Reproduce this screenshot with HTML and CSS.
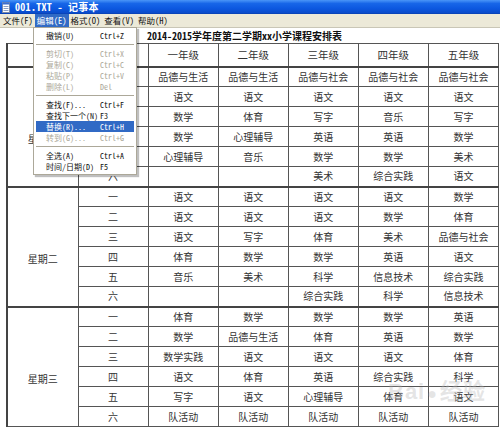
FILE: index.html
```html
<!DOCTYPE html>
<html lang="zh-CN">
<head>
<meta charset="utf-8">
<title>001.TXT - 记事本</title>
<link rel="stylesheet" href="styles.css">
</head>
<body>
<div class="window">
  <div class="titlebar">
    <svg class="app-icon" width="8" height="11" viewBox="0 0 8 11">
      <rect x="0.5" y="0.5" width="7" height="10" fill="#fff" stroke="#7a8aa8"/>
      <rect x="0.5" y="0.5" width="7" height="2" fill="#3a6fd0"/>
      <line x1="1.5" y1="4.5" x2="6.5" y2="4.5" stroke="#8aa0c8"/>
      <line x1="1.5" y1="6.5" x2="6.5" y2="6.5" stroke="#8aa0c8"/>
      <line x1="1.5" y1="8.5" x2="6.5" y2="8.5" stroke="#8aa0c8"/>
    </svg>
    <span class="title-text">001.TXT - 记事本</span>
  </div>
  <div class="menubar">
    <span class="mi">文件(F)</span>
    <span class="mi active">编辑(E)</span>
    <span class="mi">格式(O)</span>
    <span class="mi">查看(V)</span>
    <span class="mi">帮助(H)</span>
  </div>
  <div class="content">
    <div class="doc-title">2014-2015学年度第二学期xx小学课程安排表</div>
    <table class="schedule">
      <colgroup>
        <col class="c-day"><col class="c-per"><col class="c-g"><col class="c-g"><col class="c-g"><col class="c-g"><col class="c-g">
      </colgroup>
      <thead>
        <tr class="head-row"><th></th><th></th><th>一年级</th><th>二年级</th><th>三年级</th><th>四年级</th><th>五年级</th></tr>
      </thead>
      <tbody>
        <tr><td class="day" rowspan="6">星期一</td><td>一</td><td>品德与生活</td><td>品德与生活</td><td>品德与社会</td><td>品德与社会</td><td>品德与社会</td></tr>
        <tr><td>二</td><td>语文</td><td>语文</td><td>语文</td><td>语文</td><td>语文</td></tr>
        <tr><td>三</td><td>数学</td><td>体育</td><td>写字</td><td>音乐</td><td>写字</td></tr>
        <tr><td>四</td><td>数学</td><td>心理辅导</td><td>英语</td><td>英语</td><td>数学</td></tr>
        <tr><td>五</td><td>心理辅导</td><td>音乐</td><td>数学</td><td>数学</td><td>美术</td></tr>
        <tr><td>六</td><td></td><td></td><td>美术</td><td>综合实践</td><td>语文</td></tr>
      </tbody>
      <tbody>
        <tr><td class="day" rowspan="6">星期二</td><td>一</td><td>语文</td><td>语文</td><td>语文</td><td>语文</td><td>数学</td></tr>
        <tr><td>二</td><td>语文</td><td>语文</td><td>语文</td><td>数学</td><td>体育</td></tr>
        <tr><td>三</td><td>语文</td><td>写字</td><td>体育</td><td>美术</td><td>品德与社会</td></tr>
        <tr><td>四</td><td>体育</td><td>数学</td><td>数学</td><td>英语</td><td>语文</td></tr>
        <tr><td>五</td><td>音乐</td><td>美术</td><td>科学</td><td>信息技术</td><td>综合实践</td></tr>
        <tr><td>六</td><td></td><td></td><td>综合实践</td><td>科学</td><td>信息技术</td></tr>
      </tbody>
      <tbody>
        <tr><td class="day" rowspan="6">星期三</td><td>一</td><td>体育</td><td>数学</td><td>数学</td><td>数学</td><td>英语</td></tr>
        <tr><td>二</td><td>数学</td><td>品德与生活</td><td>体育</td><td>英语</td><td>数学</td></tr>
        <tr><td>三</td><td>数学实践</td><td>语文</td><td>语文</td><td>语文</td><td>体育</td></tr>
        <tr><td>四</td><td>语文</td><td>体育</td><td>英语</td><td>综合实践</td><td>科学</td></tr>
        <tr><td>五</td><td>写字</td><td>语文</td><td>心理辅导</td><td>体育</td><td>语文</td></tr>
        <tr><td>六</td><td>队活动</td><td>队活动</td><td>队活动</td><td>队活动</td><td>队活动</td></tr>
      </tbody>
    </table>
    <div class="watermark">Bai<span class="paw">●</span>经验</div>
  </div>

  <div class="dropdown">
    <div class="item"><span class="lbl">撤销(U)</span><span class="key">Ctrl+Z</span></div>
    <div class="sep"></div>
    <div class="item disabled"><span class="lbl">剪切(T)</span><span class="key">Ctrl+X</span></div>
    <div class="item disabled"><span class="lbl">复制(C)</span><span class="key">Ctrl+C</span></div>
    <div class="item disabled"><span class="lbl">粘贴(P)</span><span class="key">Ctrl+V</span></div>
    <div class="item disabled"><span class="lbl">删除(L)</span><span class="key">Del</span></div>
    <div class="sep"></div>
    <div class="item"><span class="lbl">查找(F)...</span><span class="key">Ctrl+F</span></div>
    <div class="item"><span class="lbl">查找下一个(N)</span><span class="key">F3</span></div>
    <div class="item selected"><span class="lbl">替换(R)...</span><span class="key">Ctrl+H</span></div>
    <div class="item disabled"><span class="lbl">转到(G)...</span><span class="key">Ctrl+G</span></div>
    <div class="sep"></div>
    <div class="item"><span class="lbl">全选(A)</span><span class="key">Ctrl+A</span></div>
    <div class="item"><span class="lbl">时间/日期(D)</span><span class="key">F5</span></div>
  </div>
</div>
</body>
</html>
```
FILE: styles.css
```css
* { box-sizing: border-box; }
html, body { margin: 0; padding: 0; }
body {
  width: 500px;
  height: 428px;
  overflow: hidden;
  background: #fff;
  font-family: "Noto Sans CJK SC", sans-serif;
}
.window {
  position: relative;
  width: 500px;
  height: 428px;
  display: flex;
  flex-direction: column;
  overflow: hidden;
}
.titlebar {
  height: 14px;
  flex: none;
  display: flex;
  align-items: center;
  gap: 5px;
  padding-left: 2px;
  background: linear-gradient(#4a95f8 0%, #1766e8 25%, #0c58e0 60%, #0a4ccc 90%, #083fae 100%);
  color: #fff;
}
.app-icon { flex: none; }
.title-text {
  font-family: "Noto Sans Mono CJK SC", "Noto Sans CJK SC", monospace;
  font-weight: bold;
  font-size: 10px;
  line-height: 14px;
  letter-spacing: 0.3px;
}
.menubar {
  height: 14px;
  flex: none;
  display: flex;
  padding-left: 1px;
  background: #ece9d8;
  border-bottom: 1px solid #c9c6b6;
  font-family: "Noto Sans Mono CJK SC", "Noto Sans CJK SC", monospace;
  font-size: 8.5px;
  line-height: 13px;
  color: #111;
}
.mi { padding: 0 2px; }
.mi.active { background: #316ac5; color: #fff; }

.content {
  flex: 1;
  position: relative;
  background: #fff;
}
.doc-title {
  height: 15px;
  padding-left: 147px;
  font-family: "Noto Sans Mono CJK SC", "Noto Sans CJK SC", monospace;
  font-weight: bold;
  font-size: 10px;
  line-height: 15px;
  color: #111;
}
.schedule {
  margin-left: 6px;
  width: 493px;
  table-layout: fixed;
  border-collapse: collapse;
  border-left: 2px solid #444;
  font-family: "Noto Sans CJK SC", sans-serif;
  font-size: 10px;
  color: #333;
}
.c-day { width: 71px; }
.c-per { width: 70px; }
.c-g { width: 70px; }
.schedule th, .schedule td {
  border: 1px solid #555;
  padding: 0;
  height: 20px;
  text-align: center;
  vertical-align: middle;
  font-weight: normal;
  line-height: 12px;
  white-space: nowrap;
}
.schedule .head-row th { height: 23px; border-top: 1px solid #555; font-size: 10.5px; }
.schedule tbody { border-top: 2px solid #444; }
.schedule td.day { padding-top: 24px; }

.watermark {
  position: absolute;
  left: 388px;
  top: 345px;
  font-family: "Liberation Sans", sans-serif;
  font-size: 22px;
  font-weight: bold;
  color: rgba(180, 180, 180, 0.35);
  letter-spacing: 1px;
}
.watermark .paw { font-size: 16px; margin: 0 2px; }

.dropdown {
  position: absolute;
  left: 33px;
  top: 27px;
  width: 104px;
  padding: 2px 2px 2px 2px;
  background: #fff;
  border: 1px solid #aca899;
  box-shadow: 2px 2px 1px rgba(0, 0, 0, 0.25);
  font-family: "Noto Sans Mono CJK SC", "Noto Sans CJK SC", monospace;
  font-size: 8px;
  color: #111;
}
.item {
  display: flex;
  height: 11px;
  line-height: 11px;
  padding-left: 10px;
}
.item .lbl { width: 54px; flex: none; white-space: nowrap; }
.item .key { white-space: nowrap; }
.item.disabled { color: #aca899; }
.item.selected { background: #316ac5; color: #fff; }
.sep {
  height: 7px;
  display: flex;
  align-items: center;
}
.sep::before {
  content: "";
  display: block;
  width: 100%;
  height: 1px;
  background: #aca899;
}
```
